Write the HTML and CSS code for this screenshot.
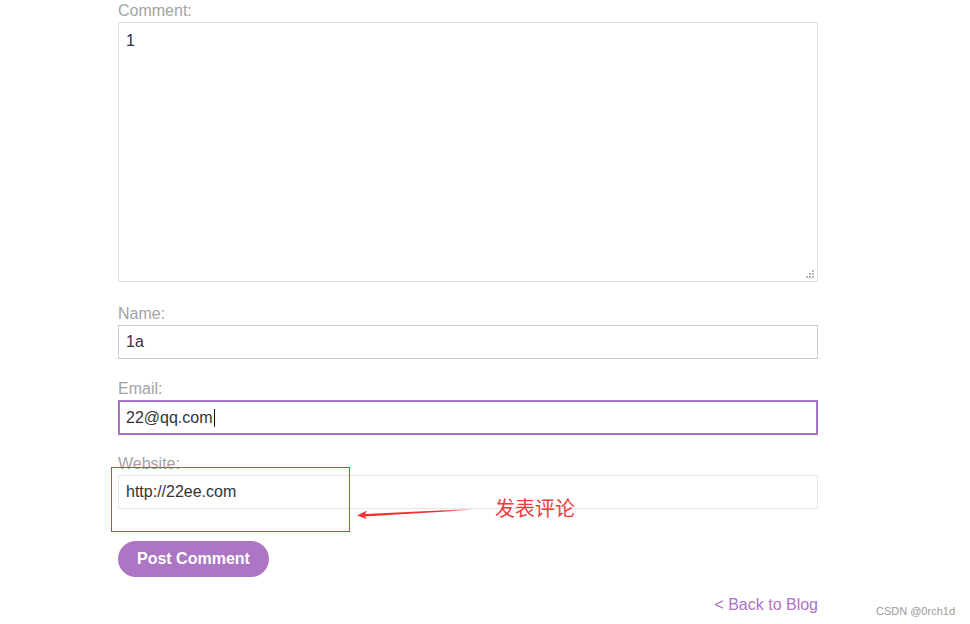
FILE: index.html
```html
<!DOCTYPE html>
<html lang="en">
<head>
<meta charset="utf-8">
<title>Post Comment</title>
<link rel="stylesheet" href="styles.css">
</head>
<body>
<div class="page">
  <form class="comment-form">
    <label class="label" for="comment">Comment:</label>
    <div class="textarea-wrap">
      <textarea id="comment" class="textarea">1</textarea>
      <svg class="grip" width="10" height="9" viewBox="0 0 10 9">
        <rect x="7" y="0" width="2" height="2" fill="#b8b8b8"/>
        <rect x="4" y="3" width="2" height="2" fill="#b8b8b8"/>
        <rect x="7" y="3" width="2" height="2" fill="#b8b8b8"/>
        <rect x="1" y="6" width="2" height="2" fill="#b8b8b8"/>
        <rect x="4" y="6" width="2" height="2" fill="#b8b8b8"/>
        <rect x="7" y="6" width="2" height="2" fill="#b8b8b8"/>
      </svg>
    </div>

    <label class="label" for="name">Name:</label>
    <input id="name" class="input" type="text" value="1a">

    <label class="label" for="email">Email:</label>
    <div class="input input-focus" id="email">22@qq.com<span class="caret"></span></div>

    <label class="label" for="website">Website:</label>
    <input id="website" class="input input-light" type="text" value="http://22ee.com">

    <button type="button" class="btn">Post Comment</button>

    <div class="back-row"><a class="back" href="#">&lt; Back to Blog</a></div>
  </form>

  <div class="annot-box"></div>
  <svg class="annot-arrow" width="120" height="12" viewBox="0 0 120 12">
    <defs>
      <linearGradient id="fade" x1="0" x2="1" y1="0" y2="0">
        <stop offset="0" stop-color="#ee3333"/>
        <stop offset="0.75" stop-color="#ee3333"/>
        <stop offset="1" stop-color="#ee3333" stop-opacity="0.2"/>
      </linearGradient>
    </defs>
    <path d="M0 7.5 L10 2.5 L8 6 L114 1 L114 2 L8 8.5 L10 11 Z" fill="url(#fade)"/>
  </svg>
  <div class="annot-text">发表评论</div>
  <div class="watermark">CSDN @0rch1d</div>
</div>
</body>
</html>
```
FILE: styles.css
```css
html, body {
  margin: 0;
  padding: 0;
  background: #ffffff;
}
body {
  font-family: "Liberation Sans", Arial, sans-serif;
  width: 970px;
  height: 624px;
  overflow: hidden;
}
.page {
  position: relative;
  width: 970px;
  height: 624px;
}
.comment-form {
  display: flex;
  flex-direction: column;
  width: 700px;
  margin-left: 118px;
}
.label {
  display: block;
  font-size: 16px;
  line-height: 18px;
  padding-top: 2px;
  color: #a3a3a3;
  margin-bottom: 2px;
}
.textarea-wrap {
  position: relative;
  width: 700px;
  height: 260px;
  margin: 0 0 21px 0;
}
.textarea {
  box-sizing: border-box;
  display: block;
  width: 700px;
  height: 260px;
  margin: 0;
  padding: 9px 7px;
  border: 1px solid #e0e0e0;
  font-family: "Liberation Sans", Arial, sans-serif;
  font-size: 16px;
  line-height: 18px;
  color: #2b2b4b;
  background: #fff;
  outline: none;
  resize: none;
}
.grip {
  position: absolute;
  right: 3px;
  bottom: 3px;
}
.input {
  box-sizing: border-box;
  display: flex;
  align-items: center;
  width: 700px;
  height: 34px;
  margin: 0 0 19px 0;
  padding: 0 7px;
  border: 1px solid #cccccc;
  font-family: "Liberation Sans", Arial, sans-serif;
  font-size: 16px;
  color: #333333;
  background: #fff;
  outline: none;
}
.input-focus {
  border: 2px solid #a873c1;
  height: 35px;
  padding: 0 6px;
  margin-bottom: 18px;
}
.input-light {
  border-color: #e6e6e6;
  margin-bottom: 32px;
}
.caret {
  display: inline-block;
  width: 1px;
  height: 18px;
  background: #111;
  margin-left: 1px;
}
.btn {
  align-self: flex-start;
  height: 36px;
  padding: 0 19px;
  border: none;
  border-radius: 18px;
  background: #ad76c4;
  color: #ffffff;
  font-family: "Liberation Sans", Arial, sans-serif;
  font-weight: bold;
  font-size: 16px;
  cursor: pointer;
}
.back-row {
  display: flex;
  justify-content: flex-end;
  margin-top: 19px;
}
.back {
  font-size: 16px;
  line-height: 18px;
  color: #ae72c8;
  text-decoration: none;
}
.annot-box {
  position: absolute;
  left: 111px;
  top: 467px;
  width: 237px;
  height: 63px;
  border: 1px solid #e83a3a;
}
.annot-arrow {
  position: absolute;
  left: 357px;
  top: 508px;
}
.annot-text {
  position: absolute;
  left: 495px;
  top: 496px;
  font-family: "Noto Sans CJK SC", sans-serif;
  font-size: 20px;
  line-height: 24px;
  color: #ee3b3b;
}
.watermark {
  position: absolute;
  right: 15px;
  bottom: 7px;
  font-family: "Liberation Sans", Arial, sans-serif;
  font-size: 11px;
  color: #9a9a9a;
}
```
